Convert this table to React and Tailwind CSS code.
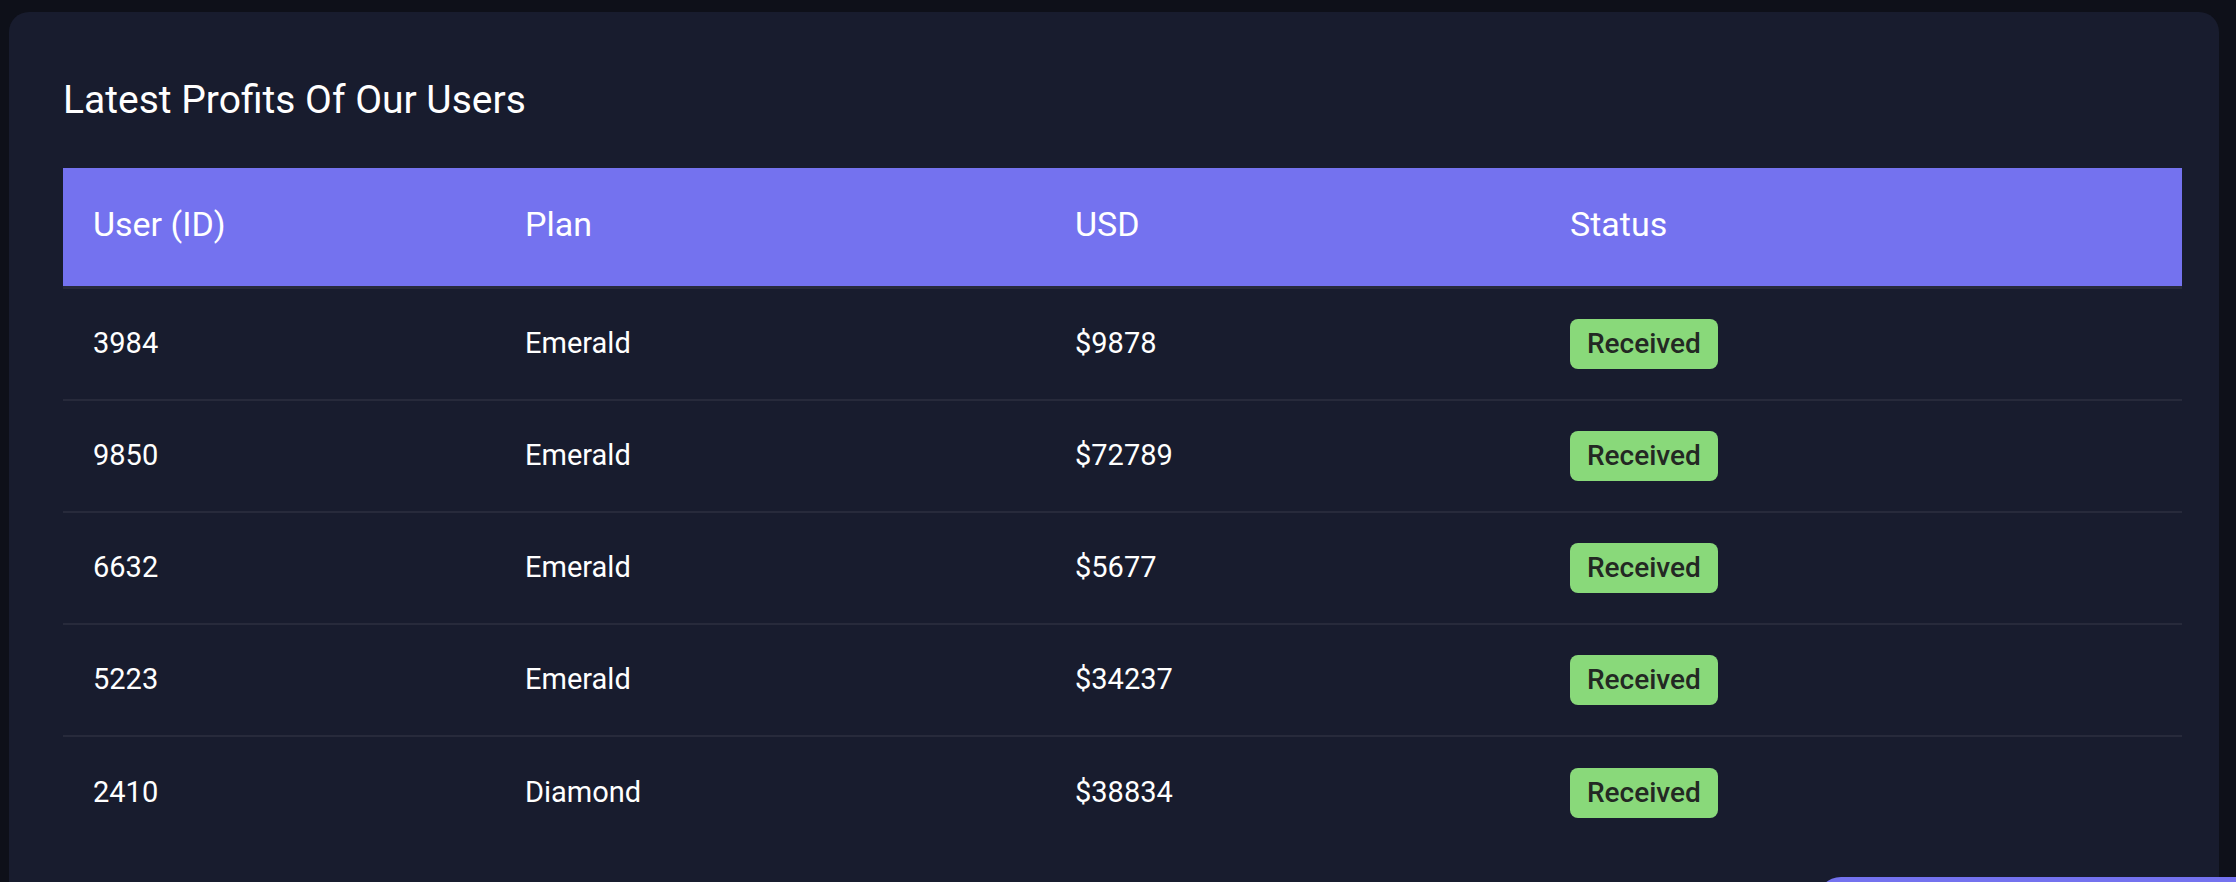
const rows = [
  { id: "3984", plan: "Emerald", usd: "$9878" },
  { id: "9850", plan: "Emerald", usd: "$72789" },
  { id: "6632", plan: "Emerald", usd: "$5677" },
  { id: "5223", plan: "Emerald", usd: "$34237" },
  { id: "2410", plan: "Diamond", usd: "$38834" },
];

const cols = "grid grid-cols-[432px_550px_495px_1fr]";

export default function App() {
  return (
    <div className="relative h-[882px] overflow-hidden bg-[#0e1019] pl-[9px] pr-[17px] pt-[12px] font-['Roboto',sans-serif]">
      <div className="min-h-[960px] rounded-[20px] bg-[#181c2e] pl-[54px] pr-[37px] pt-[62px]">
        <h2 className="text-[39px] leading-[52px] text-white">Latest Profits Of Our Users</h2>

        <div className="mt-[42px]">
          <div className={`${cols} h-[121px] items-center border-b-[3px] border-[#272a3b] bg-[#7472ef] pb-[6px] text-[34px] text-white`}>
            <div className="px-[30px]">User (ID)</div>
            <div className="px-[30px]">Plan</div>
            <div className="px-[30px]">USD</div>
            <div className="px-[30px]">Status</div>
          </div>

          {rows.map((row, i) => (
            <div
              key={row.id}
              className={`${cols} h-[112px] items-center text-[29px] text-white ${
                i < rows.length - 1 ? "border-b-2 border-[#272a3b]" : ""
              }`}
            >
              <div className="px-[30px]">{row.id}</div>
              <div className="px-[30px]">{row.plan}</div>
              <div className="px-[30px]">{row.usd}</div>
              <div className="px-[30px]">
                <span className="inline-flex h-[50px] items-center rounded-[8px] bg-[#89d97a] px-[17px] text-[28px] font-medium text-[#232823]">
                  Received
                </span>
              </div>
            </div>
          ))}
        </div>
      </div>

      <div className="absolute left-[1817px] top-[877px] h-[60px] w-[460px] rounded-[24px] bg-[#7472ef]" />
    </div>
  );
}
